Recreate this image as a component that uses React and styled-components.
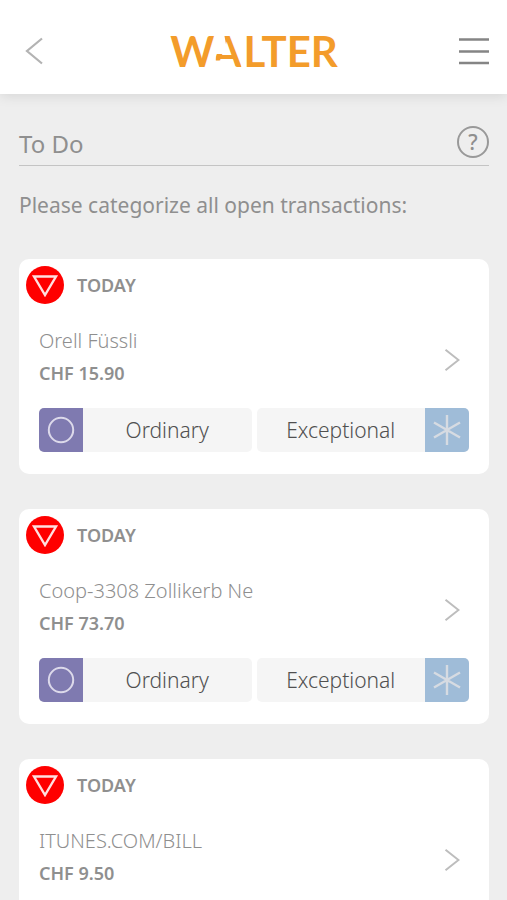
import React from "react";
import styled, { createGlobalStyle } from "styled-components";

const GlobalStyle = createGlobalStyle`
  *, *::before, *::after { box-sizing: border-box; }
  body {
    margin: 0;
    background: #eeeeee;
    color: #8f8f8f;
    font-family: "Noto Sans", "Open Sans", sans-serif;
  }
  h1, h2, p, ul { margin: 0; padding: 0; }
  button {
    margin: 0;
    padding: 0;
    border: 0;
    background: none;
    color: inherit;
    font: inherit;
    cursor: pointer;
  }
  svg { display: block; fill: none; }
`;

const Screen = styled.div`
  height: 100vh;
  overflow-y: auto;
  scrollbar-width: none;
`;

const TopBar = styled.header`
  display: grid;
  grid-template-columns: 48px 1fr 48px;
  align-items: center;
  height: 94px;
  padding: 8px 9px 0 10px;
  background: #ffffff;
  box-shadow: 0 2px 12px rgba(0, 0, 0, 0.1);
`;

const IconButton = styled.button`
  display: grid;
  place-items: center;
  width: 48px;
  height: 48px;
`;

const Logo = styled.div`
  color: #f39c2b;
  font-family: Lato, sans-serif;
  font-size: 42px;
  font-weight: 700;
  line-height: 48px;
  text-align: center;
`;

const CutLetter = styled.span`
  display: inline-block;
  margin: 0 2px 0 -2px;
  clip-path: polygon(36% 0, 100% 0, 100% 100%, 60% 100%, 56% 70%, 12% 70%, 12% 56%, 47% 56%, 47% 36%);
`;

const Main = styled.main`
  padding: 28px 18px 35px 19px;
`;

const TitleRow = styled.div`
  display: flex;
  align-items: center;
  justify-content: space-between;
  height: 44px;
  border-bottom: 1px solid #c4c4c4;
`;

const Title = styled.h1`
  font-size: 24px;
  font-weight: 400;
  line-height: 36px;
`;

const HelpButton = styled.button`
  display: grid;
  place-items: center;
  width: 32px;
  height: 32px;
  margin-bottom: 4px;
  border: 2px solid #999999;
  border-radius: 50%;
  font-size: 21px;
  font-weight: 500;
  line-height: 28px;
`;

const Intro = styled.p`
  margin-top: 24px;
  font-size: 21px;
  line-height: 30px;
`;

const CardList = styled.ul`
  display: grid;
  gap: 35px;
  margin-top: 39px;
  list-style: none;
`;

const Card = styled.li`
  padding: 7px 20px 22px;
  border-radius: 10px;
  background: #ffffff;
`;

const CardHeader = styled.div`
  display: flex;
  align-items: center;
  gap: 13px;
  margin-left: -13px;
`;

const Badge = styled.span`
  display: grid;
  place-items: center;
  width: 38px;
  height: 38px;
  border-radius: 50%;
  background: #ff0000;
`;

const Day = styled.h2`
  font-size: 18px;
  font-weight: 600;
  line-height: 24px;
`;

const Details = styled.button`
  display: flex;
  align-items: center;
  justify-content: space-between;
  width: 100%;
  margin-top: 21px;
  padding-right: 9px;
  text-align: left;
`;

const Chevron = styled.svg`
  flex: none;
  margin-top: 6px;
`;

const Merchant = styled.span`
  display: block;
  font-size: 20px;
  font-weight: 300;
  line-height: 32px;
`;

const Amount = styled.span`
  display: block;
  font-size: 18px;
  font-weight: 600;
  line-height: 32px;
`;

const Choices = styled.div`
  display: grid;
  grid-template-columns: 1fr 1fr;
  gap: 5px;
  margin-top: 19px;
`;

const Choice = styled.button`
  display: flex;
  flex-direction: ${(p) => (p.$iconAfter ? "row-reverse" : "row")};
  height: 44px;
  overflow: hidden;
  border-radius: 5px;
  background: #f5f5f5;
  color: #505050;
  font-size: 21px;
  font-weight: 300;
  line-height: 44px;
`;

const ChoiceIcon = styled.span`
  display: grid;
  place-items: center;
  flex: none;
  width: 44px;
  height: 44px;
  background: ${(p) => p.$color};
`;

const ChoiceLabel = styled.span`
  flex: 1;
  text-align: center;
`;

const transactions = [
  { id: 1, day: "TODAY", merchant: "Orell Füssli", amount: "CHF 15.90" },
  { id: 2, day: "TODAY", merchant: "Coop-3308 Zollikerb Ne", amount: "CHF 73.70" },
  { id: 3, day: "TODAY", merchant: "ITUNES.COM/BILL", amount: "CHF 9.50" },
];

function Transaction({ day, merchant, amount }) {
  return (
    <Card>
      <CardHeader>
        <Badge>
          <svg width="28" height="24" viewBox="0 0 28 24" stroke="#ffe1e1" strokeWidth="2.4" aria-hidden="true">
            <path d="M3 3.500h22L14 22z" />
          </svg>
        </Badge>
        <Day>{day}</Day>
      </CardHeader>
      <Details>
        <span>
          <Merchant>{merchant}</Merchant>
          <Amount>{amount}</Amount>
        </span>
        <Chevron width="16" height="24" viewBox="0 0 16 24" stroke="#bdbdbd" strokeWidth="2" aria-hidden="true">
          <path d="M1.500 1.800L14.500 12 1.500 22.200" />
        </Chevron>
      </Details>
      <Choices>
        <Choice>
          <ChoiceIcon $color="#7f7ab0">
            <svg width="28" height="28" viewBox="0 0 28 28" stroke="#dcd9ea" strokeWidth="2" aria-hidden="true">
              <circle cx="14" cy="14" r="12.200" />
            </svg>
          </ChoiceIcon>
          <ChoiceLabel>Ordinary</ChoiceLabel>
        </Choice>
        <Choice $iconAfter>
          <ChoiceIcon $color="#9fbcd8">
            <svg width="30" height="30" viewBox="0 0 30 30" stroke="#d6dbe2" strokeWidth="2.4" aria-hidden="true">
              <path d="M15 0v30M2 7.500l26 15M28 7.500l-26 15" />
            </svg>
          </ChoiceIcon>
          <ChoiceLabel>Exceptional</ChoiceLabel>
        </Choice>
      </Choices>
    </Card>
  );
}

export default function App() {
  return (
    <Screen>
      <GlobalStyle />
      <TopBar>
        <IconButton aria-label="Back">
          <svg width="18" height="28" viewBox="0 0 18 28" stroke="#b3b3b3" strokeWidth="2.2" aria-hidden="true">
            <path d="M17 1.500L2 14l15 12.500" />
          </svg>
        </IconButton>
        <Logo>
          W<CutLetter>A</CutLetter>LTER
        </Logo>
        <IconButton aria-label="Menu">
          <svg width="30" height="30" viewBox="0 0 30 30" stroke="#858585" strokeWidth="2.6" aria-hidden="true">
            <path d="M0 3.500h30M0 15.500h30M0 27h30" />
          </svg>
        </IconButton>
      </TopBar>
      <Main>
        <TitleRow>
          <Title>To Do</Title>
          <HelpButton aria-label="Help">?</HelpButton>
        </TitleRow>
        <Intro>Please categorize all open transactions:</Intro>
        <CardList>
          {transactions.map((t) => (
            <Transaction key={t.id} day={t.day} merchant={t.merchant} amount={t.amount} />
          ))}
        </CardList>
      </Main>
    </Screen>
  );
}
